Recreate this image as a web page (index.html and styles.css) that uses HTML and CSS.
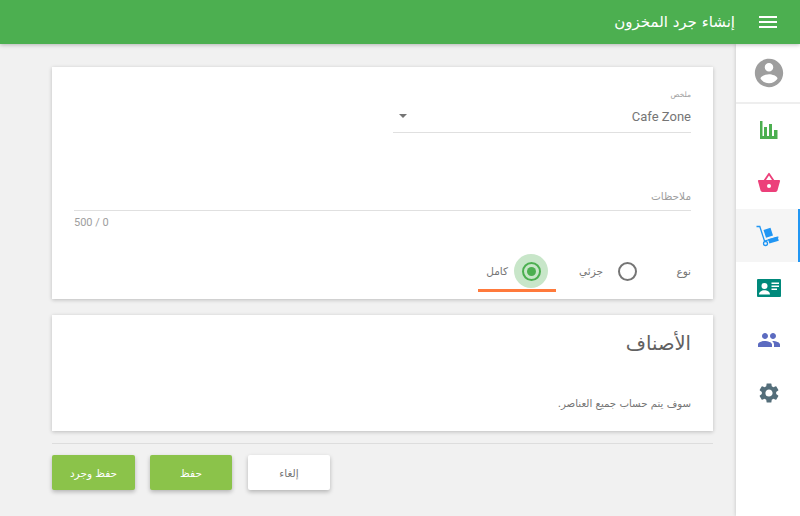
FILE: index.html
```html
<!DOCTYPE html>
<html lang="ar" dir="rtl">
<head>
  <meta charset="UTF-8" />
  <title>إنشاء جرد المخزون</title>
  <link rel="stylesheet" href="styles.css">
</head>
<body>
  <header class="topbar">
    <svg class="menu-icon" viewBox="0 0 24 24"><path fill="#fff" d="M3 18h18v-2H3v2zm0-5h18v-2H3v2zm0-7v2h18V6H3z"/></svg>
    <h1>إنشاء جرد المخزون</h1>
  </header>

  <div class="layout">
    <nav class="sidebar">
      <div class="side-user">
        <svg viewBox="0 0 24 24" class="avatar"><path fill="#9e9e9e" d="M12 2C6.48 2 2 6.48 2 12s4.48 10 10 10 10-4.48 10-10S17.52 2 12 2zm0 3c1.66 0 3 1.34 3 3s-1.34 3-3 3-3-1.34-3-3 1.34-3 3-3zm0 14.2c-2.5 0-4.71-1.28-6-3.22.03-1.99 4-3.08 6-3.08 1.99 0 5.97 1.09 6 3.08-1.29 1.94-3.5 3.22-6 3.22z"/></svg>
      </div>
      <a class="side-item"><svg viewBox="0 0 24 24"><path fill="#4caf50" d="M3 3h2.500v15H7V9h3v9h2V6h3v12h2v-6h3.500v9H3z"/></svg></a>
      <a class="side-item"><svg viewBox="0 0 24 24"><path fill="#ec407a" d="M17.210 9l-4.380-6.560a1 1 0 0 0-1.660 0L6.790 9H2a1 1 0 0 0-1 1.270l2.540 9.270A2 2 0 0 0 5.500 21h13a2 2 0 0 0 1.930-1.460L23 10.270A1 1 0 0 0 22 9h-4.790zM9 9l3-4.400L15 9H9zm3 8a2 2 0 1 1 0-4 2 2 0 0 1 0 4z"/></svg></a>
      <a class="side-item active"><svg viewBox="0 0 24 24"><path fill="none" stroke="#2196f3" stroke-width="1.300" d="M0.500 3.500h3.300l4.700 14.500 14-4"/><circle cx="9.500" cy="20.500" r="2" fill="none" stroke="#2196f3" stroke-width="1.300"/><path fill="#2196f3" d="M7.500 7l7-2.200 2.500 7.800-7 2.200zM12 16.300l9.500-2.800 1.300 4.300-9.500 2.700z"/></svg></a>
      <a class="side-item"><svg viewBox="0 0 24 24"><path fill="#00897b" d="M1 3h22a1 1 0 0 1 1 1v16a1 1 0 0 1-1 1H1a1 1 0 0 1-1-1V4a1 1 0 0 1 1-1z"/><circle cx="7.500" cy="10" r="3" fill="#fff"/><path fill="#fff" d="M2 18.500c0-3 3.200-4.300 5.500-4.300s5.500 1.300 5.500 4.300zM14.500 6.500H22V8h-7.500zM14.500 9.500H22V11h-7.500zM14.500 12.500H20V14h-5.500z"/></svg></a>
      <a class="side-item"><svg viewBox="0 0 24 24"><path fill="#5c6bc0" d="M16 11c1.660 0 2.990-1.340 2.990-3S17.660 5 16 5c-1.660 0-3 1.340-3 3s1.340 3 3 3zm-8 0c1.660 0 2.990-1.340 2.990-3S9.660 5 8 5C6.340 5 5 6.340 5 8s1.340 3 3 3zm0 2c-2.330 0-7 1.170-7 3.500V19h14v-2.500c0-2.330-4.670-3.500-7-3.500zm8 0c-.29 0-.62.020-.97.050 1.160.84 1.970 1.970 1.970 3.450V19h6v-2.500c0-2.330-4.670-3.500-7-3.500z"/></svg></a>
      <a class="side-item"><svg viewBox="0 0 24 24"><path fill="#546e7a" d="M19.140 12.940c.04-.3.060-.61.060-.94 0-.32-.02-.64-.07-.94l2.030-1.580a.49.49 0 0 0 .12-.61l-1.920-3.320a.49.49 0 0 0-.59-.22l-2.390.96c-.5-.38-1.030-.7-1.620-.94l-.36-2.540a.48.48 0 0 0-.48-.41h-3.840c-.24 0-.43.17-.47.41l-.36 2.540c-.59.24-1.130.57-1.620.94l-2.390-.96a.49.49 0 0 0-.59.22L2.740 8.870c-.12.21-.08.47.12.61l2.030 1.580c-.05.3-.09.63-.09.94s.02.64.07.94l-2.030 1.580a.49.49 0 0 0-.12.61l1.920 3.320c.12.22.37.29.59.22l2.390-.96c.5.38 1.030.7 1.620.94l.36 2.540c.05.24.24.41.48.41h3.840c.24 0 .44-.17.47-.41l.36-2.540c.59-.24 1.130-.56 1.620-.94l2.390.96c.22.08.47 0 .59-.22l1.920-3.320a.49.49 0 0 0-.12-.61l-2.010-1.580zM12 15.600A3.610 3.610 0 0 1 8.400 12c0-1.980 1.620-3.600 3.600-3.600s3.600 1.620 3.600 3.600-1.620 3.600-3.600 3.600z"/></svg></a>
    </nav>

    <main class="content">
      <section class="card form-card">
        <div class="select-field">
          <span class="small-label">ملخص</span>
          <div class="select-value">
            <span class="latin">Cafe Zone</span>
            <span class="caret"></span>
          </div>
        </div>

        <div class="notes-field">ملاحظات</div>
        <div class="counter">500 / 0</div>

        <div class="type-row">
          <span class="type-label">نوع</span>
          <label class="radio">
            <span class="radio-ring"></span>
            <span>جزئي</span>
          </label>
          <label class="radio selected">
            <span class="radio-halo"><span class="radio-ring"><span class="radio-dot"></span></span></span>
            <span>كامل</span>
          </label>
        </div>
      </section>

      <section class="card items-card">
        <h2>الأصناف</h2>
        <p>سوف يتم حساب جميع العناصر.</p>
      </section>

      <div class="actions">
        <button class="btn cancel">إلغاء</button>
        <button class="btn primary">حفظ</button>
        <button class="btn primary wide">حفظ وجرد</button>
      </div>
    </main>
  </div>
</body>
</html>
```

FILE: styles.css
```css
* {
  box-sizing: border-box;
}

html, body {
  height: 100%;
}

body {
  margin: 0;
  height: 516px;
  overflow: hidden;
  background-color: #f1f1f1;
  font-family: 'DejaVu Sans', sans-serif;
  color: #757575;
}

.topbar {
  position: relative;
  z-index: 2;
  display: flex;
  align-items: center;
  height: 44px;
  padding: 0 22px 0 0;
  background-color: #4caf50;
  box-shadow: 0 1px 4px rgba(0, 0, 0, 0.25);
  color: #fff;
}

.menu-icon {
  width: 24px;
  height: 24px;
  margin-left: 21px;
  margin-right: -2px;
}

.topbar h1 {
  margin: 0;
  font-size: 15px;
  font-weight: 400;
}

.layout {
  display: flex;
  height: 472px;
}

.sidebar {
  flex: 0 0 64px;
  background-color: #fff;
  box-shadow: 0 0 4px rgba(0, 0, 0, 0.2);
}

.side-user {
  display: flex;
  align-items: center;
  justify-content: center;
  height: 60px;
  padding-left: 2px;
  border-bottom: 2px solid #eee;
}

.avatar {
  width: 34px;
  height: 34px;
}

.side-item {
  display: flex;
  align-items: center;
  justify-content: center;
  height: 52.500px;
  padding-left: 2px;
}

.side-item svg {
  width: 24px;
  height: 24px;
}

.side-item.active {
  background-color: #f5f5f5;
  border-right: 2px solid #2196f3;
}

.content {
  flex: 1;
  padding: 23px 23px 0 52px;
}

.card {
  background-color: #fff;
  box-shadow: 0 1px 4px rgba(0, 0, 0, 0.22);
}

.form-card {
  height: 232px;
  padding: 21px 22px 0;
}

.select-field {
  width: 298px;
  height: 44px;
  border-bottom: 1px solid #e0e0e0;
}

.small-label {
  display: block;
  height: 12px;
  margin-top: 1px;
  margin-bottom: -1px;
  font-size: 7.500px;
  line-height: 12px;
  color: #9e9e9e;
}

.select-value {
  display: flex;
  align-items: center;
  justify-content: space-between;
  height: 32px;
  padding-left: 6px;
}

.latin {
  font-family: Roboto, sans-serif;
  font-size: 13px;
  color: #757575;
}

.caret {
  width: 0;
  height: 0;
  border-left: 4px solid transparent;
  border-right: 4px solid transparent;
  border-top: 4px solid #757575;
}

.notes-field {
  height: 33px;
  margin-top: 45px;
  padding-top: 11px;
  border-bottom: 1px solid #e0e0e0;
  font-size: 10.500px;
  line-height: 14px;
  color: #9e9e9e;
}

.counter {
  margin-top: 5px;
  text-align: left;
  direction: ltr;
  font-family: Roboto, sans-serif;
  font-size: 11px;
  color: #9e9e9e;
}

.type-row {
  display: flex;
  align-items: center;
  height: 36px;
  margin-top: 24px;
  font-size: 10.500px;
}

.type-label {
  width: 35px;
  margin-left: 19px;
  white-space: nowrap;
}

.radio {
  display: flex;
  align-items: center;
  gap: 15px;
  height: 36px;
  margin-left: 31px;
}

.radio-ring {
  display: flex;
  align-items: center;
  justify-content: center;
  width: 19px;
  height: 19px;
  border: 2px solid #757575;
  border-radius: 50%;
}

.radio.selected {
  position: relative;
  gap: 6px;
  margin-left: 0;
}

.radio.selected::after {
  content: "";
  position: absolute;
  top: 36px;
  right: -8px;
  width: 78px;
  height: 3px;
  background-color: #ff7a3c;
}

.radio-halo {
  display: flex;
  align-items: center;
  justify-content: center;
  width: 34px;
  height: 34px;
  border-radius: 50%;
  background-color: #c8e6c9;
}

.radio.selected .radio-ring {
  border-color: #4caf50;
}

.radio-dot {
  width: 9px;
  height: 9px;
  border-radius: 50%;
  background-color: #4caf50;
}

.items-card {
  height: 116px;
  margin-top: 16px;
  padding: 16px 22px 0;
}

.items-card h2 {
  margin: 0;
  font-size: 19.500px;
  font-weight: 400;
  line-height: 26px;
  color: #616161;
}

.items-card p {
  margin: 40px 0 0;
  font-size: 10.200px;
  line-height: 14px;
  color: #757575;
}

.actions {
  display: flex;
  gap: 15px;
  margin-top: 12px;
  padding-top: 11px;
  padding-right: 383px;
  border-top: 1px solid #ddd;
}

.btn {
  flex: 0 0 82px;
  height: 35px;
  border: none;
  border-radius: 2px;
  background-color: #fff;
  box-shadow: 0 2px 4px rgba(0, 0, 0, 0.25);
  font-family: inherit;
  font-size: 10.500px;
  color: #757575;
}

.btn.cancel {
  margin-left: 1px;
}

.btn.wide {
  flex-basis: 83px;
}

.btn.primary {
  background-color: #8bc34a;
  color: #fff;
}
```
